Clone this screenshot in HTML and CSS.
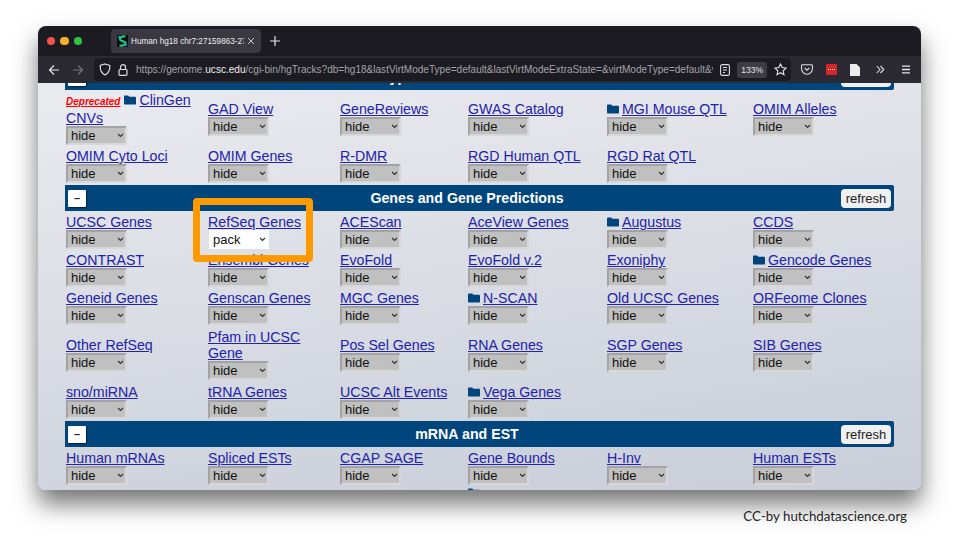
FILE: index.html

```html
<!DOCTYPE html>
<html>
<head>
  <title>Human hg18 chr7 - UCSC Genome Browser</title>
  <link rel="stylesheet" href="styles.css">
</head>
<body>

<svg class="defs" width="0" height="0">
  <symbol id="folder" viewBox="0 0 13 10">
    <path d="M0 1.2C0 .5.5 0 1.2 0h3.300l1.400 1.400h5.900c.7 0 1.200.5 1.200 1.200v6.200c0 .7-.5 1.200-1.200 1.200H1.200C.5 10 0 9.500 0 8.800z"/>
  </symbol>
</svg>

<div class="window">
  <div class="tabbar">
    <div class="lights">
      <span class="light red"></span>
      <span class="light yellow"></span>
      <span class="light green"></span>
    </div>
    <div class="tab">
      <svg class="favicon" width="11" height="12" viewBox="0 0 11 12">
        <rect width="11" height="12" fill="#0b0f10"/>
        <path d="M8.500 1.500C5 1 2.500 2.500 3 4.500s5.500 1.500 5.500 3.500S5 11 2.500 10.500" fill="none" stroke="#26c281" stroke-width="2.200"/>
        <path d="M1 1h2v2H1zM8 9h2v2H8z" fill="#1b8fd6"/>
      </svg>
      <span class="tab-title">Human hg18 chr7:27159863-27</span>
      <svg width="8" height="8" viewBox="0 0 8 8"><path d="M1 1l6 6M7 1L1 7" stroke="#c9c9cf" stroke-width="1"/></svg>
    </div>
    <svg class="newtab" width="10" height="10" viewBox="0 0 10 10"><path d="M5 0v10M0 5h10" stroke="#e4e4e8" stroke-width="1.200"/></svg>
  </div>

  <div class="toolbar">
    <svg class="nav-btn" width="12" height="12" viewBox="0 0 12 12"><path d="M11 6H1.500M6 1.500L1.500 6 6 10.500" fill="none" stroke="#e4e4e8" stroke-width="1.200"/></svg>
    <svg class="nav-btn" width="12" height="12" viewBox="0 0 12 12"><path d="M1 6h9.500M6 1.500L10.500 6 6 10.500" fill="none" stroke="#75747b" stroke-width="1.200"/></svg>
    <div class="urlbar">
      <svg width="12" height="13" viewBox="0 0 12 13"><path d="M6 1l4.800 1.500c.2 4.500-1.300 7.800-4.800 9.500C2.500 10.300 1 7 1.200 2.500z" fill="none" stroke="#dcdce0" stroke-width="1.200"/></svg>
      <svg width="10" height="12" viewBox="0 0 10 12"><path d="M2.500 5.500V3.200a2.500 2.500 0 0 1 5 0v2.300" fill="none" stroke="#dcdce0" stroke-width="1.200"/><rect x="1" y="5.500" width="8" height="5.800" rx="1" fill="none" stroke="#dcdce0" stroke-width="1.200"/></svg>
      <span class="url">https://genome.<b>ucsc.edu</b>/cgi-bin/hgTracks?db=hg18&amp;lastVirtModeType=default&amp;lastVirtModeExtraState=&amp;virtModeType=default&amp;v</span>
      <svg width="10" height="12" viewBox="0 0 10 12"><rect x=".6" y=".6" width="8.800" height="10.800" rx="1.500" fill="none" stroke="#dcdce0" stroke-width="1.100"/><path d="M3 3.500h4M3 6h4M3 8.500h2" stroke="#dcdce0"/></svg>
      <span class="zoom-pill">133%</span>
      <svg width="13" height="13" viewBox="0 0 13 13"><path d="M6.500 1l1.700 3.600 3.900.5-2.900 2.700.8 3.900-3.500-2-3.500 2 .8-3.900L.9 5.100l3.900-.5z" fill="none" stroke="#e4e4e8" stroke-width="1.100"/></svg>
    </div>
    <div class="tools">
      <svg width="12" height="11" viewBox="0 0 12 11"><path d="M1.500.7h9c.5 0 .9.400.9.900v3.200a5.400 5.400 0 0 1-10.800 0V1.600c0-.5.400-.9.900-.9z" fill="none" stroke="#dcdce0" stroke-width="1.100"/><path d="M3.700 4L6 6.200 8.300 4" fill="none" stroke="#dcdce0" stroke-width="1.100"/></svg>
      <span class="ext-red"></span>
      <svg width="10" height="12" viewBox="0 0 10 12"><path d="M0 0h6.500L10 3.500V12H0z" fill="#ececef"/></svg>
      <svg class="wide-gap" width="9" height="9" viewBox="0 0 9 9"><path d="M.8 1L4 4.500.8 8M4.500 1l3.300 3.500L4.500 8" fill="none" stroke="#dcdce0" stroke-width="1.100"/></svg>
      <svg class="wide-gap" width="10" height="9" viewBox="0 0 10 9"><path d="M1 1.200h8M1 4.500h8M1 7.800h8" stroke="#e4e4e8" stroke-width="1.300"/></svg>
    </div>
  </div>

  <div class="page">
    <div class="section-bar">
      <button class="collapse">&ndash;</button>
      <span class="section-title">Phenotype and Disease Associations</span>
      <button class="refresh">refresh</button>
    </div>
    <div class="tracks">
      <div class="track">
        <a class="deprecated" href="#">Deprecated</a> <svg class="folder"><use href="#folder"/></svg><a href="#">ClinGen CNVs</a>
        <select><option>hide</option></select>
      </div>
      <div class="track"><a href="#">GAD View</a><select><option>hide</option></select></div>
      <div class="track"><a href="#">GeneReviews</a><select><option>hide</option></select></div>
      <div class="track"><a href="#">GWAS Catalog</a><select><option>hide</option></select></div>
      <div class="track"><svg class="folder"><use href="#folder"/></svg><a href="#">MGI Mouse QTL</a><select><option>hide</option></select></div>
      <div class="track"><a href="#">OMIM Alleles</a><select><option>hide</option></select></div>

      <div class="track"><a href="#">OMIM Cyto Loci</a><select><option>hide</option></select></div>
      <div class="track"><a href="#">OMIM Genes</a><select><option>hide</option></select></div>
      <div class="track"><a href="#">R-DMR</a><select><option>hide</option></select></div>
      <div class="track"><a href="#">RGD Human QTL</a><select><option>hide</option></select></div>
      <div class="track"><a href="#">RGD Rat QTL</a><select><option>hide</option></select></div>
    </div>

    <div class="section-bar">
      <button class="collapse">&ndash;</button>
      <span class="section-title">Genes and Gene Predictions</span>
      <button class="refresh">refresh</button>
    </div>
    <div class="tracks">
      <div class="track"><a href="#">UCSC Genes</a><select><option>hide</option></select></div>
      <div class="track"><a href="#">RefSeq Genes</a><select class="on"><option>pack</option></select></div>
      <div class="track"><a href="#">ACEScan</a><select><option>hide</option></select></div>
      <div class="track"><a href="#">AceView Genes</a><select><option>hide</option></select></div>
      <div class="track"><svg class="folder"><use href="#folder"/></svg><a href="#">Augustus</a><select><option>hide</option></select></div>
      <div class="track"><a href="#">CCDS</a><select><option>hide</option></select></div>

      <div class="track"><a href="#">CONTRAST</a><select><option>hide</option></select></div>
      <div class="track"><a href="#">Ensembl Genes</a><select><option>hide</option></select></div>
      <div class="track"><a href="#">EvoFold</a><select><option>hide</option></select></div>
      <div class="track"><a href="#">EvoFold v.2</a><select><option>hide</option></select></div>
      <div class="track"><a href="#">Exoniphy</a><select><option>hide</option></select></div>
      <div class="track"><svg class="folder"><use href="#folder"/></svg><a href="#">Gencode Genes</a><select><option>hide</option></select></div>

      <div class="track"><a href="#">Geneid Genes</a><select><option>hide</option></select></div>
      <div class="track"><a href="#">Genscan Genes</a><select><option>hide</option></select></div>
      <div class="track"><a href="#">MGC Genes</a><select><option>hide</option></select></div>
      <div class="track"><svg class="folder"><use href="#folder"/></svg><a href="#">N-SCAN</a><select><option>hide</option></select></div>
      <div class="track"><a href="#">Old UCSC Genes</a><select><option>hide</option></select></div>
      <div class="track"><a href="#">ORFeome Clones</a><select><option>hide</option></select></div>

      <div class="track"><a href="#">Other RefSeq</a><select><option>hide</option></select></div>
      <div class="track tall"><a href="#">Pfam in UCSC Gene</a><select><option>hide</option></select></div>
      <div class="track"><a href="#">Pos Sel Genes</a><select><option>hide</option></select></div>
      <div class="track"><a href="#">RNA Genes</a><select><option>hide</option></select></div>
      <div class="track"><a href="#">SGP Genes</a><select><option>hide</option></select></div>
      <div class="track"><a href="#">SIB Genes</a><select><option>hide</option></select></div>

      <div class="track"><a href="#">sno/miRNA</a><select><option>hide</option></select></div>
      <div class="track"><a href="#">tRNA Genes</a><select><option>hide</option></select></div>
      <div class="track"><a href="#">UCSC Alt Events</a><select><option>hide</option></select></div>
      <div class="track"><svg class="folder"><use href="#folder"/></svg><a href="#">Vega Genes</a><select><option>hide</option></select></div>
    </div>

    <div class="section-bar">
      <button class="collapse">&ndash;</button>
      <span class="section-title">mRNA and EST</span>
      <button class="refresh">refresh</button>
    </div>
    <div class="tracks">
      <div class="track"><a href="#">Human mRNAs</a><select><option>hide</option></select></div>
      <div class="track"><a href="#">Spliced ESTs</a><select><option>hide</option></select></div>
      <div class="track"><a href="#">CGAP SAGE</a><select><option>hide</option></select></div>
      <div class="track"><a href="#">Gene Bounds</a><select><option>hide</option></select></div>
      <div class="track"><a href="#">H-Inv</a><select><option>hide</option></select></div>
      <div class="track"><a href="#">Human ESTs</a><select><option>hide</option></select></div>

      <div class="track next-row"><svg class="folder"><use href="#folder"/></svg></div>
    </div>

    <div class="callout"></div>
  </div>
</div>

<p class="credit">CC-by hutchdatascience.org</p>

</body>
</html>
```

FILE: styles.css

```css
body { margin: 0; width: 960px; height: 540px; overflow: hidden; background: white; font-family: "Liberation Sans", Arial, sans-serif; }
.defs { display: block; height: 0; }

.window { margin: 26px 39px 0 38px; height: 464px; border-radius: 8px; display: flex; flex-direction: column; box-shadow: 0 14px 24px rgba(0,0,0,.55); }

.tabbar { height: 30px; flex: none; background: #1c1b22; border-radius: 8px 8px 0 0; display: flex; align-items: center; }
.lights { display: flex; gap: 5px; margin-left: 8.500px; }
.light { width: 8.500px; height: 8.500px; border-radius: 50%; }
.red { background: #f2544c; }
.yellow { background: #f6b12c; }
.green { background: #2ec840; }
.tab { margin-left: 29px; width: 150px; height: 24px; box-sizing: border-box; padding: 0 6px; background: #3a3942; border-radius: 4px; display: flex; align-items: center; gap: 3px; }
.tab-title { flex: 1; color: #ececef; font-size: 8.200px; white-space: nowrap; overflow: hidden; }
.newtab { margin-left: 9px; }

.toolbar { height: 27px; flex: none; background: #2b2a33; display: flex; align-items: center; }
.nav-btn { margin-left: 10px; margin-right: 2px; }
.urlbar { margin-left: 8px; width: 697px; height: 23px; box-sizing: border-box; padding: 0 4px 0 5px; background: #1c1b22; border-radius: 4px; display: flex; align-items: center; gap: 7px; }
.url { flex: 1; color: #a3a3a8; font-size: 10.050px; white-space: nowrap; overflow: hidden; margin-left: 1px; }
.url b { color: #f1f1f3; font-weight: normal; }
.zoom-pill { background: #3d3c45; color: #e4e4e8; font-size: 8.500px; padding: 3px 4px; border-radius: 3px; }
.tools { display: flex; align-items: center; gap: 13px; margin-left: 10px; }
.wide-gap { margin-left: 3px; }
.ext-red { width: 11px; height: 11px; background: #d6262b; border-radius: 1px; }
.ext-red::after { content: ""; display: block; margin: 5px 2px 0; height: 1px; border-top: 1px dotted white; }

.page { flex: 1; overflow: hidden; position: relative; background: linear-gradient(172deg, #eaebef, #c8cdd8); border-radius: 0 0 8px 8px; color: #111; }

.section-bar { margin: -19px 27px 0 27px; height: 26px; box-sizing: border-box; padding: 0 3px; background: #00457c; border-radius: 0 2px 2px 0; display: flex; align-items: center; color: white; font-size: 14.200px; font-weight: bold; }
.tracks + .section-bar { margin-top: 0; }
.section-title { flex: 1; text-align: center; padding-left: 7px; }
.collapse { width: 18px; height: 17px; padding: 0; background: white; border: 0; border-radius: 1px; box-shadow: 1px 1px 1px rgba(0,0,0,.5); color: #222; font-size: 11px; font-weight: bold; font-family: inherit; }
.refresh { width: 50px; height: 19px; padding: 0; background: #f0f0f1; border: 0; border-radius: 4px; color: #222; font-size: 13px; font-family: inherit; }

.tracks { margin-left: 28px; padding: 3px 0 2px; display: grid; grid-template-columns: 142px 132px 128px 139px 146px 1fr; row-gap: 3px; align-items: center; }
.section-bar:first-child + .tracks { padding-top: 2px; }
.track { font-size: 14.200px; line-height: 16px; padding-right: 8px; }
.track.tall { padding-top: 1px; padding-bottom: 1px; }
.track a { color: #2222aa; }
.track select { display: block; appearance: none; width: 61px; height: 19px; padding: 0 0 0 3px; margin: 0; border: 2px solid; border-color: #a3a3a3 #d8d8da #d8d8da #a3a3a3; border-radius: 0; background: #c0c0c0 url("data:image/svg+xml,%3Csvg xmlns='http://www.w3.org/2000/svg' width='7' height='5'%3E%3Cpath d='M1 1l2.500 2.500L6 1' fill='none' stroke='%23333' stroke-width='1.200'/%3E%3C/svg%3E") no-repeat right 1px center; color: #111; font-size: 13px; font-family: inherit; }
.track select.on { background-color: white; border-color: white; margin-left: 1px; width: 60px; padding-left: 2px; }

.folder { width: 12px; height: 10px; margin: 0 3px 3px 0; vertical-align: middle; fill: #00457c; }
.deprecated.deprecated { color: #f00; font-size: 10px; font-weight: bold; font-style: italic; }
.next-row { grid-column: 4; }
.next-row .folder { display: block; }

.callout { position: absolute; left: 155px; top: 115px; width: 120px; height: 64px; box-sizing: border-box; border: 7px solid #ff9900; border-radius: 4px; }

.credit { margin: 18px 53px 0 0; text-align: right; font-family: Lato, sans-serif; font-size: 13.300px; color: #222; }
```
